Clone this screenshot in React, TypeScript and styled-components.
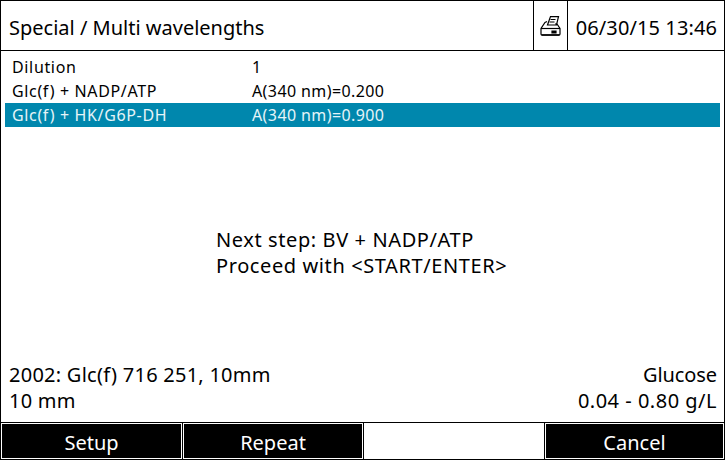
import styled, { createGlobalStyle } from 'styled-components';

const GlobalStyle = createGlobalStyle`
  html, body {
    margin: 0;
    padding: 0;
    background: #fff;
  }
`;

const Screen = styled.div`
  width: 725px;
  height: 460px;
  box-sizing: border-box;
  border: 1px solid #000;
  display: flex;
  flex-direction: column;
  overflow: hidden;
  font-family: 'Noto Sans', 'Open Sans', sans-serif;
  color: #000;
`;

const Header = styled.header`
  height: 50px;
  flex: none;
  box-sizing: border-box;
  border-bottom: 1px solid #000;
  display: flex;
  align-items: stretch;
`;

const Title = styled.h1`
  flex: 1;
  margin: 0;
  padding: 0 0 0 8px;
  font-size: 20px;
  font-weight: 400;
  line-height: 54px;
`;

const PrinterCell = styled.div`
  width: 33px;
  border-left: 1px solid #000;
  display: flex;
  align-items: center;
  justify-content: center;
`;

const DateCell = styled.div`
  width: 157px;
  border-left: 1px solid #000;
  font-size: 20px;
  letter-spacing: 0.1px;
  line-height: 54px;
  text-align: right;
  padding-right: 7px;
  box-sizing: border-box;
`;

const List = styled.div`
  flex: none;
  padding: 4px 4px 0 4px;
`;

const Row = styled.div<{ $selected?: boolean }>`
  height: 24px;
  box-sizing: border-box;
  padding: 0 0 0 7px;
  display: flex;
  align-items: center;
  font-size: 16px;
  background: ${(props) => (props.$selected ? '#0087ad' : 'transparent')};
  color: ${(props) => (props.$selected ? '#e6f4f8' : '#000')};
`;

const RowName = styled.span`
  width: 240px;
  letter-spacing: 0.65px;
`;

const RowValue = styled.span`
  letter-spacing: 0.4px;
`;

const Message = styled.div`
  flex: 1;
  padding: 16px 0 0 215px;
  font-size: 20px;
  letter-spacing: 0.6px;
  line-height: 26px;
  display: flex;
  flex-direction: column;
  justify-content: center;
`;

const Info = styled.div`
  flex: none;
  height: 60px;
  box-sizing: border-box;
  padding: 0 7px 0 8px;
  display: flex;
  justify-content: space-between;
  font-size: 20px;
  letter-spacing: 0.25px;
  line-height: 26px;
`;

const InfoRight = styled.div`
  text-align: right;
`;

const Analyte = styled.div`
  letter-spacing: -0.1px;
`;

const Range = styled.div`
  letter-spacing: 0.5px;
`;

const SoftKeys = styled.div`
  flex: none;
  height: 37px;
  box-sizing: border-box;
  padding-top: 1px;
  background: #000;
  display: grid;
  grid-template-columns: 181px 180px 180px 179px;
  column-gap: 1px;
`;

const SoftKey = styled.div<{ $empty?: boolean }>`
  box-sizing: border-box;
  border: 1px solid #fff;
  background: ${(props) => (props.$empty ? '#fff' : '#000')};
  color: #fff;
  font-size: 20px;
  padding-top: 2px;
  display: flex;
  align-items: center;
  justify-content: center;
`;

const PrinterIcon = () => (
  <svg width="21" height="20" viewBox="0 0 21 20" fill="none" stroke="#000" strokeWidth="1.2">
    <path d="M10.500 .6h8l-2 8.400h-9z" fill="#fff" />
    <path d="M10.500 3.500h5M9.500 6h5" />
    <path d="M7 5.500l-2 1-4 6v5.500c0 .6 .4 1 1 1h17c.6 0 1-.4 1-1v-5.500l-3-4.500h-2" />
    <path d="M1 12.500h19" />
    <path d="M12 15h4v2h-4z" fill="#000" />
    <path d="M1.500 19h18" strokeWidth="1.600" />
  </svg>
);

export default function App() {
  return (
    <>
      <GlobalStyle />
      <Screen>
        <Header>
          <Title>Special / Multi wavelengths</Title>
          <PrinterCell>
            <PrinterIcon />
          </PrinterCell>
          <DateCell>06/30/15 13:46</DateCell>
        </Header>
        <List>
          <Row>
            <RowName>Dilution</RowName>
            <RowValue>1</RowValue>
          </Row>
          <Row>
            <RowName>Glc(f) + NADP/ATP</RowName>
            <RowValue>A(340 nm)=0.200</RowValue>
          </Row>
          <Row $selected>
            <RowName>Glc(f) + HK/G6P-DH</RowName>
            <RowValue>A(340 nm)=0.900</RowValue>
          </Row>
        </List>
        <Message>
          <div>Next step: BV + NADP/ATP</div>
          <div>Proceed with &lt;START/ENTER&gt;</div>
        </Message>
        <Info>
          <div>
            <div>2002: Glc(f) 716 251, 10mm</div>
            <div>10 mm</div>
          </div>
          <InfoRight>
            <Analyte>Glucose</Analyte>
            <Range>0.04 - 0.80 g/L</Range>
          </InfoRight>
        </Info>
        <SoftKeys>
          <SoftKey>Setup</SoftKey>
          <SoftKey>Repeat</SoftKey>
          <SoftKey $empty />
          <SoftKey>Cancel</SoftKey>
        </SoftKeys>
      </Screen>
    </>
  );
}
